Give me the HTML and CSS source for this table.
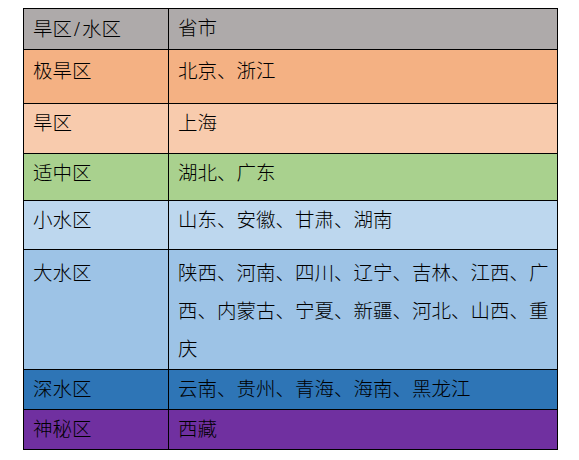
FILE: index.html
```html
<!DOCTYPE html>
<html lang="zh-CN">
<head>
<meta charset="utf-8">
<title>旱区/水区</title>
<link rel="stylesheet" href="styles.css">
</head>
<body>
<div class="page">
<table class="zones">
  <tr class="r-head"><td class="c1">旱区<span class="slash">/</span>水区</td><td class="c2">省市</td></tr>
  <tr class="r-extreme"><td class="c1">极旱区</td><td class="c2">北京、浙江</td></tr>
  <tr class="r-dry"><td class="c1">旱区</td><td class="c2">上海</td></tr>
  <tr class="r-mid"><td class="c1">适中区</td><td class="c2">湖北、广东</td></tr>
  <tr class="r-small"><td class="c1">小水区</td><td class="c2">山东、安徽、甘肃、湖南</td></tr>
  <tr class="r-big"><td class="c1">大水区</td><td class="c2">陕西、河南、四川、辽宁、吉林、江西、广西、内蒙古、宁夏、新疆、河北、山西、重庆</td></tr>
  <tr class="r-deep"><td class="c1">深水区</td><td class="c2">云南、贵州、青海、海南、黑龙江</td></tr>
  <tr class="r-myst"><td class="c1">神秘区</td><td class="c2">西藏</td></tr>
</table>
</div>
</body>
</html>
```

FILE: styles.css
```css
html, body {
  margin: 0;
  padding: 0;
  background: #ffffff;
}
.page {
  padding: 8px 0 0 23px;
}
.zones {
  border-collapse: collapse;
  width: 534px;
  table-layout: fixed;
  font-family: "Liberation Serif", "Noto Sans CJK SC", serif;
  font-size: 19.5px;
  font-weight: 300;
  line-height: 38px;
  color: #000000;
}
.zones td {
  border: 1px solid #000000;
  vertical-align: top;
  padding: 1px 5px 0 9px;
  box-sizing: border-box;
}
.zones .c1 { width: 145px; }
.zones .c2 { width: 389px; }

.slash {
  display: inline-block;
  width: 10px;
  text-align: center;
  font-size: 21px;
}

.r-head { height: 40px; background: #aeaaaa; }
.r-extreme { height: 54px; background: #f4b183; }
.r-extreme td { padding-top: 3px; }
.r-dry { height: 50px; background: #f8cbad; }
.r-mid { height: 47px; background: #a9d18e; }
.r-small { height: 49px; background: #bdd7ee; }
.r-big { height: 119px; background: #9dc3e6; }
.r-big td { padding-top: 5px; }
.r-deep { height: 40px; background: #2e75b6; }
.r-myst { height: 39px; background: #7030a0; }
```
